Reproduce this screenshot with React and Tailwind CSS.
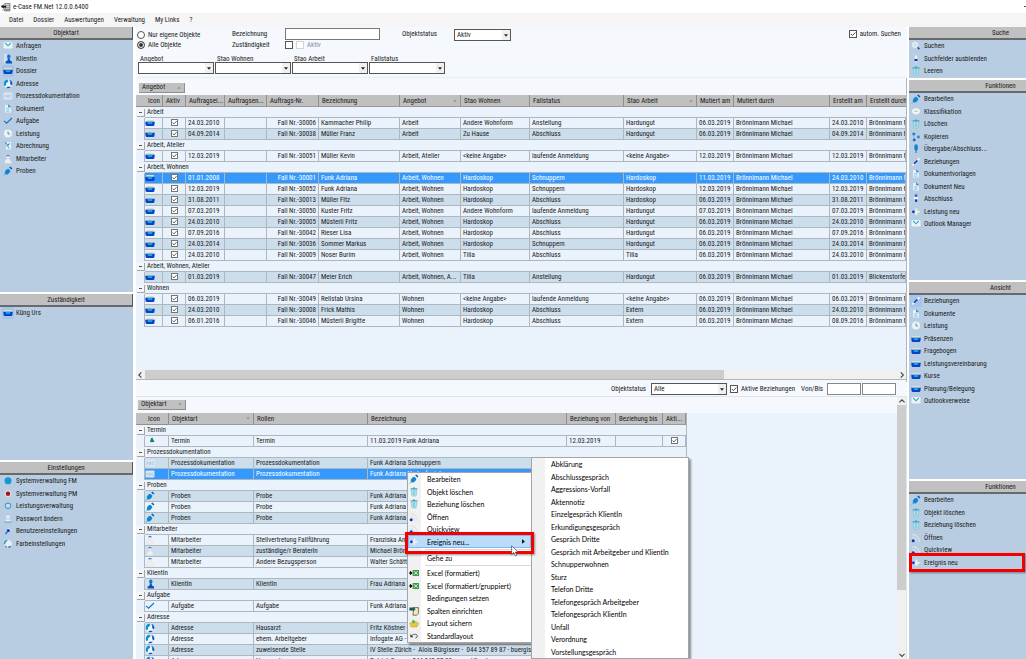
import { useState } from "react";
import clsx from "clsx";

/* ---------- icons ---------- */

const ICONS = {
  mail: (
    <>
      <rect x=".5" y="1" width="9" height="6.6" rx="1.4" fill="#eef2f3" />
      <path d="M2.2 2 L5 4.8 L7.8 2" fill="none" stroke="#25b2d4" strokeWidth="1.1" />
    </>
  ),
  person: (
    <>
      <rect x="1" y="0" width="3" height="9.6" fill="#d3e0ec" />
      <ellipse cx="5.8" cy="2.6" rx="1.7" ry="2.2" fill="#0a78d2" />
      <path d="M4.9 4.4 H6.7 L7 6.6 L9 7.4 V9.4 H2.6 V7.4 L4.6 6.6 Z" fill="#0a50c4" />
    </>
  ),
  tray: (
    <>
      <path d="M1.4 2 H8.6 L9.4 4 H.6 Z" fill="#dedcd4" />
      <path d="M.2 3.8 H9.8 L9.4 7 Q9.2 8 8.2 8 H1.8 Q.8 8 .6 7 Z" fill="#0a3fcb" />
      <path d="M2.4 3.8 H7.6 L7 6 H3 Z" fill="#14a4d6" />
    </>
  ),
  globe: (
    <>
      <circle cx="5" cy="5" r="4.4" fill="#f2f7fa" />
      <path d="M1 3.2 A4.4 4.4 0 0 1 4.4 .6 L5.4 2.4 L3 4.2 L3 6.6 L1.4 7 A4.4 4.4 0 0 1 1 3.2 Z" fill="#0a8fd8" />
      <path d="M6 .8 A4.4 4.4 0 0 1 9.4 5.4 L8 6.4 L7 4 L7.4 2.8 Z" fill="#0a5cc6" />
      <path d="M3.2 9 L4.6 7.8 L8 7.8 A4.4 4.4 0 0 1 3.2 9 Z" fill="#0a50c4" />
    </>
  ),
  abc: (
    <>
      <rect x=".5" y="1.6" width="9" height="7" rx="1" fill="#dbe7f1" />
      <path d="M1.6 6.6 L2.4 3.8 L3.2 6.6 M4.4 4 H5.6 V6.4 H4.4 Z M8.6 4 H7 V6.4 H8.6" fill="none" stroke="#93bfe0" strokeWidth=".6" />
    </>
  ),
  doc: (
    <>
      <path d="M2 1 H6 L8 3.4 V8.6 H2 Z" fill="#e4f0f8" />
      <path d="M5.2 .2 L8.2 3.2 H5.2 Z" fill="#1a8cd2" />
      <path d="M3.2 4.6 H6.4 M3.2 6 H6.4 M3.2 7.4 H6.4" stroke="#6cbce4" strokeWidth=".6" />
    </>
  ),
  check: <path d="M1 4.8 L3.6 7.2 L9 2" fill="none" stroke="#0f74c8" strokeWidth="1.1" />,
  clock: (
    <>
      <circle cx="5" cy="4.6" r="4" fill="#eff2f0" />
      <path d="M5 2.4 V5 H7" fill="none" stroke="#22a8d0" strokeWidth="1" />
    </>
  ),
  bill: (
    <>
      <path d="M3.2 1 H8 V8.6 H3.2 Z" fill="#e8f1f5" />
      <path d="M2.2 1 L4.8 4.6 L6.6 2.4" fill="none" stroke="#1a9cd0" strokeWidth="1.1" />
      <path d="M4.6 5.2 L6.2 7.6" stroke="#4688c8" strokeWidth=".9" />
    </>
  ),
  staff: (
    <>
      <circle cx="5" cy="2.8" r="1.8" fill="#f0efec" stroke="#cfd6dc" strokeWidth=".3" />
      <path d="M3.2 2.2 A1.9 1.9 0 0 1 6.8 2.2 Z" fill="#2a6cd0" />
      <path d="M4 4.8 H6 L8.2 7.2 V9.2 H1.8 V7.2 Z" fill="#f0efec" stroke="#cfd6dc" strokeWidth=".3" />
    </>
  ),
  pen: (
    <>
      <path d="M1.8 5.8 Q3.2 3 5.4 2.8 L7.4 4.8 Q7 7.2 4.4 8.4 L2 8.2 Z" fill="#0c86d2" />
      <path d="M6.2 1.4 L7.4 .4 L9.4 2.4 L8.4 3.6 Z" fill="#0a50c4" />
      <path d="M.6 9.6 L2.4 7.8" stroke="#4cb8dc" strokeWidth="1" />
    </>
  ),
  magnifier: (
    <>
      <circle cx="4" cy="3.8" r="2.8" fill="#d3e4ef" stroke="#e6eef2" strokeWidth="1" />
      <path d="M6.6 6.4 L8.4 8.2" stroke="#1a58c4" strokeWidth="1.6" />
    </>
  ),
  updown: (
    <>
      <path d="M5 .8 L6.8 3.4 H3.2 Z M4.2 3.4 H5.8 V5 H4.2 Z" fill="#f2f3f2" />
      <rect x="3.6" y="5" width="2.8" height="2.2" fill="#0836c4" />
      <rect x="4.2" y="7.2" width="1.6" height="1.4" fill="#f2f3f2" />
    </>
  ),
  trash: (
    <>
      <path d="M1.6 1.2 H8.4 V2.4 H1.6 Z M4 .4 H6 V1.2 H4 Z" fill="#35a9c8" />
      <path d="M2.2 3 H7.8 L7 9 H3 Z" fill="#dff1f5" stroke="#5cbcd4" strokeWidth=".6" />
      <path d="M4.2 3.4 V8.2 M5.8 3.4 V8.2" stroke="#35a9c8" strokeWidth=".7" />
    </>
  ),
  bubble: (
    <>
      <ellipse cx="5" cy="4.2" rx="4" ry="3" fill="#f2f4f4" />
      <path d="M3.2 4.2 H6.8" stroke="#9fb8cc" strokeWidth=".9" />
      <path d="M3.8 6.6 L5 8.2 L6 6.6 Z" fill="#f2f4f4" />
    </>
  ),
  copy: (
    <>
      <circle cx="2.8" cy="2" r="1.5" fill="#0f78cf" />
      <circle cx="7.4" cy="5" r="1.4" fill="#1c88da" />
      <circle cx="3.2" cy="7.8" r="1.5" fill="#0f66cb" />
      <path d="M2.8 2 V7.8" stroke="#77b4e0" strokeWidth=".7" />
    </>
  ),
  pin: (
    <>
      <rect x="3.4" y=".2" width="3.4" height="6.4" rx="1.7" fill="#0f84d4" />
      <path d="M5 6 V9" stroke="#2a68b8" strokeWidth="1" />
    </>
  ),
  link: (
    <>
      <path d="M1.4 8.4 L3.6 6.4" stroke="#f4f6f6" strokeWidth="1.8" />
      <path d="M3 6.8 L6.8 3" stroke="#0a3cc4" strokeWidth="1.6" />
      <path d="M6.4 3.4 L8.4 1.4" stroke="#f4f6f6" strokeWidth="1.8" />
    </>
  ),
  stamp: (
    <>
      <rect x="3.9" y=".4" width="2.4" height="2.4" fill="#1a6aca" />
      <path d="M3.2 3 H6.8 L7.4 5.2 H2.6 Z" fill="#f2f3f2" />
      <rect x="4" y="5.4" width="2.2" height="2.4" fill="#0836c4" />
    </>
  ),
  plusdot: (
    <>
      <path d="M5.4 1.6 V8 M2.4 4.8 H8.6" stroke="#f1f1ee" strokeWidth="1.8" />
      <circle cx="2.4" cy="4.8" r="1.4" fill="#0836c4" />
    </>
  ),
  dotCyan: <circle cx="5" cy="4.8" r="3.5" fill="#1398d2" />,
  dotRed: (
    <>
      <circle cx="5" cy="4.8" r="3.6" fill="#d7dce4" />
      <circle cx="5" cy="4.8" r="2.2" fill="#a8121c" />
    </>
  ),
  ring: <circle cx="5" cy="4.8" r="2.8" fill="#c9dcec" stroke="#2a94cc" strokeWidth="1" />,
  password: (
    <>
      <circle cx="5" cy="2.8" r="1.9" fill="#e3eaf0" />
      <path d="M2.4 5.4 H7.6 V7.2 H2.4 Z" fill="#e3eaf0" />
      <path d="M1.4 8.2 H8.6" stroke="#5cb0d8" strokeWidth="1" />
    </>
  ),
  tool: (
    <>
      <path d="M5 1.4 L8.4 4.2 L5 5.8 Z" fill="#e8eef3" />
      <path d="M2.4 8 L5.2 4.8" stroke="#2f6cc8" strokeWidth="1.4" />
      <circle cx="5.4" cy="4.6" r="1.5" fill="#0a3cc4" />
    </>
  ),
  palette: (
    <>
      <circle cx="5" cy="4.8" r="3.8" fill="#e9eff2" />
      <path d="M4.2 1.4 A3.6 3.6 0 0 0 1.6 5.2 M2.2 7 L4 8.4" fill="none" stroke="#2a8fd2" strokeWidth="1.2" />
      <path d="M5.4 8.4 L7.6 7.4" stroke="#1a58c4" strokeWidth="1.2" />
    </>
  ),
  rss: (
    <>
      <path d="M1.2 4.6 A4.8 4.8 0 0 1 5.8 9.2 M1.2 1.6 A7.6 7.6 0 0 1 8.8 9.2" fill="none" stroke="#dfe1e2" strokeWidth="1.2" />
      <circle cx="2.2" cy="7.8" r="1.5" fill="#0836c4" />
    </>
  ),
  termin: (
    <>
      <path d="M5 6 Q5.6 1.6 7.4 1.4 Q8.4 4 9.6 6 Z" fill="#0f7f78" />
      <path d="M5 6.6 H7.4" stroke="#c8dce4" strokeWidth=".8" />
    </>
  ),
  excel: (
    <>
      <path d="M0 5 H2.4 M1.4 3.4 L3.2 5 L1.4 6.6 Z" stroke="#111" strokeWidth="1" fill="#111" />
      <rect x="3.6" y="2" width="6.4" height="6" fill="#3f9c48" />
      <path d="M5 3.2 L8.6 6.8 M8.6 3.2 L5 6.8" stroke="#e4f3e2" strokeWidth="1" />
    </>
  ),
  columns: (
    <>
      <path d="M4.6 1.6 H9.4 V7.6 L7.6 9.2 H4 Z" fill="#f3ebb4" stroke="#444" strokeWidth=".7" />
      <path d="M.4 1.6 H4 V.8 L6.6 3.2 L4 5.4 V4.4 H.4 Z" fill="#175a68" />
    </>
  ),
  save: (
    <>
      <path d="M.8 5 L8 4 L9.8 5.4 L8 9 H2 Z" fill="#e8c93c" stroke="#a8932c" strokeWidth=".4" />
      <path d="M3 4.6 L3.6 1.6 L6.6 3.6 L4.8 5.6 Z" fill="#52b548" />
    </>
  ),
  undo: (
    <>
      <path d="M2.6 4.8 C4 2.8 8.4 2.8 8.2 5 C8.2 6.4 7.4 7 6.4 7" fill="none" stroke="#444" strokeWidth=".9" />
      <path d="M1.4 3 V6.2 H4.4 Z" fill="#333" />
    </>
  ),
  logo: (
    <>
      <rect x="3.4" y="1" width="6" height="8.4" fill="#8b8b8b" />
      <path d="M4.6 2.6 H8.2 M4.6 4.4 H8.2 M4.6 6.2 H8.2" stroke="#fff" strokeWidth=".8" />
      <path d="M0 4.4 L2.6 2.8 V4 H5 V5.4 H2.6 V6.4 Z M1 8 H4" fill="#222" stroke="#222" strokeWidth=".4" />
    </>
  ),
};

const Icon = ({ name }) => (
  <svg viewBox="0 0 10 10" className="size-[10px] shrink-0" aria-hidden="true">
    {ICONS[name]}
  </svg>
);

/* ---------- data ---------- */

const MENU = ["Datei", "Dossier", "Auswertungen", "Verwaltung", "My Links", "?"];

const OBJEKTART = [
  ["mail", "Anfragen"],
  ["person", "KlientIn"],
  ["tray", "Dossier"],
  ["globe", "Adresse"],
  ["abc", "Prozessdokumentation"],
  ["doc", "Dokument"],
  ["check", "Aufgabe"],
  ["clock", "Leistung"],
  ["bill", "Abrechnung"],
  ["staff", "Mitarbeiter"],
  ["pen", "Proben"],
];

const EINSTELLUNGEN = [
  ["dotCyan", "Systemverwaltung FM"],
  ["dotRed", "Systemverwaltung PM"],
  ["ring", "Leistungsverwaltung"],
  ["password", "Passwort ändern"],
  ["tool", "Benutzereinstellungen"],
  ["palette", "Farbeinstellungen"],
];

const SUCHE = [
  ["magnifier", "Suchen"],
  ["updown", "Suchfelder ausblenden"],
  ["trash", "Leeren"],
];

const FUNKTIONEN = [
  ["pen", "Bearbeiten"],
  ["bubble", "Klassifikation"],
  ["trash", "Löschen"],
  ["copy", "Kopieren"],
  ["pin", "Übergabe/Abschluss..."],
  ["link", "Beziehungen"],
  ["doc", "Dokumentvorlagen"],
  ["doc", "Dokument Neu"],
  ["stamp", "Abschluss"],
  ["plusdot", "Leistung neu"],
  ["mail", "Outlook Manager"],
];

const ANSICHT = [
  ["link", "Beziehungen"],
  ["doc", "Dokumente"],
  ["clock", "Leistung"],
  ["tray", "Präsenzen"],
  ["tray", "Fragebogen"],
  ["tray", "Leistungsvereinbarung"],
  ["tray", "Kurse"],
  ["tray", "Planung/Belegung"],
  ["mail", "Outlookverweise"],
];

const FUNKTIONEN_DETAIL = [
  ["pen", "Bearbeiten"],
  ["trash", "Objekt löschen"],
  ["trash", "Beziehung löschen"],
  ["rss", "Öffnen"],
  ["rss", "Quickview"],
  ["plusdot", "Ereignis neu"],
];

const BM = "Brönnimann Michael";

const DOSSIERS = [
  {
    group: "Arbeit",
    rows: [
      ["24.03.2010", "30006", "Kammacher Philip", "Arbeit", "Andere Wohnform", "Anstellung", "Hardungut", "06.03.2019", BM, "24.03.2010", BM],
      ["04.09.2014", "30038", "Müller Franz", "Arbeit", "Zu Hause", "Abschluss", "Hardungut", "06.03.2019", BM, "04.09.2014", BM],
    ],
  },
  {
    group: "Arbeit, Atelier",
    rows: [
      ["12.03.2019", "30051", "Müller Kevin", "Arbeit, Atelier", "<keine Angabe>", "laufende Anmeldung", "<keine Angabe>", "12.03.2019", BM, "12.03.2019", BM],
    ],
  },
  {
    group: "Arbeit, Wohnen",
    rows: [
      ["01.01.2008", "30001", "Funk Adriana", "Arbeit, Wohnen", "Hardoskop", "Schnuppern", "Hardoskop", "11.03.2019", BM, "24.03.2010", BM],
      ["12.03.2019", "30052", "Funk Adriana", "Arbeit, Wohnen", "Hardoskop", "Schnuppern", "Hardoskop", "12.03.2019", BM, "12.03.2019", BM],
      ["31.08.2011", "30013", "Müller Fitz", "Arbeit, Wohnen", "Hardoskop", "Abschluss", "Hardoskop", "06.03.2019", BM, "31.08.2011", BM],
      ["07.03.2019", "30050", "Kuster Fritz", "Arbeit, Wohnen", "Andere Wohnform", "laufende Anmeldung", "Hardungut", "07.03.2019", BM, "07.03.2019", BM],
      ["24.03.2010", "30005", "Müsterli Fritz", "Arbeit, Wohnen", "Hardoskop", "Abschluss", "Hardungut", "06.03.2019", BM, "24.03.2010", BM],
      ["07.09.2016", "30042", "Rieser Lisa", "Arbeit, Wohnen", "Hardoskop", "Abschluss", "Hardungut", "06.03.2019", BM, "07.09.2016", BM],
      ["24.03.2014", "30036", "Sommer Markus", "Arbeit, Wohnen", "Hardoskop", "Schnuppern", "Hardungut", "06.03.2019", BM, "24.03.2014", BM],
      ["24.03.2010", "30009", "Noser Burim", "Arbeit, Wohnen", "Tilia", "Abschluss", "Tilia", "06.03.2019", BM, "24.03.2010", BM],
    ],
  },
  {
    group: "Arbeit, Wohnen, Atelier",
    rows: [
      ["01.03.2019", "30047", "Meier Erich", "Arbeit, Wohnen, A...", "Tilia", "Anstellung", "Hardungut", "06.03.2019", BM, "01.03.2019", "Blickenstorfer"],
    ],
  },
  {
    group: "Wohnen",
    rows: [
      ["06.03.2019", "30049", "Rellstab Ursina", "Wohnen", "<keine Angabe>", "laufende Anmeldung", "<keine Angabe>", "06.03.2019", BM, "06.03.2019", BM],
      ["24.03.2010", "30008", "Frick Mathis", "Wohnen", "Hardoskop", "Abschluss", "Extern", "06.03.2019", BM, "24.03.2010", BM],
      ["06.01.2016", "30046", "Müsterli Brigitte", "Wohnen", "Hardoskop", "Abschluss", "Extern", "06.03.2019", BM, "08.09.2016", BM],
    ],
  },
];

const BEZIEHUNGEN = [
  { group: "Termin", rows: [["termin", "Termin", "Termin", "11.03.2019 Funk Adriana", "12.03.2019"]] },
  {
    group: "Prozessdokumentation",
    rows: [
      ["abc", "Prozessdokumentation", "Prozessdokumentation", "Funk Adriana Schnuppern"],
      ["abc", "Prozessdokumentation", "Prozessdokumentation", "Funk Adriana Verlaufseintrag"],
    ],
  },
  {
    group: "Proben",
    rows: [
      ["pen", "Proben", "Probe", "Funk Adriana"],
      ["pen", "Proben", "Probe", "Funk Adriana"],
      ["pen", "Proben", "Probe", "Funk Adriana"],
    ],
  },
  {
    group: "Mitarbeiter",
    rows: [
      ["staff", "Mitarbeiter", "Stellvertretung Fallführung", "Franziska An"],
      ["staff", "Mitarbeiter", "zuständige/r BeraterIn", "Michael Brön"],
      ["staff", "Mitarbeiter", "Andere Bezugsperson", "Walter Schätt"],
    ],
  },
  { group: "KlientIn", rows: [["person", "KlientIn", "KlientIn", "Frau Adriana"]] },
  { group: "Aufgabe", rows: [["check", "Aufgabe", "Aufgabe", "Funk Adriana"]] },
  {
    group: "Adresse",
    rows: [
      ["globe", "Adresse", "Hausarzt", "Fritz Köstner -"],
      ["globe", "Adresse", "ehem. Arbeitgeber", "Infogate AG -"],
      ["globe", "Adresse", "zuweisende Stelle", "IV Stelle Zürich -  Alois Bürgisser -  044 357 89 87 - buergiss"],
      ["globe", "Adresse", "Hausarzt", "Patrick Favre -  044 545 87 88 - p.arzt@web.com"],
    ],
  },
];

const CONTEXT_MAIN = [
  ["pen", "Bearbeiten"],
  ["trash", "Objekt löschen"],
  ["trash", "Beziehung löschen"],
  ["rss", "Öffnen"],
  ["rss", "Quickview"],
  ["plusdot", "Ereignis neu..."],
];

const CONTEXT_TOOLS = [
  ["excel", "Excel (formatiert)"],
  ["excel", "Excel (formatiert/gruppiert)"],
  [null, "Bedingungen setzen"],
  ["columns", "Spalten einrichten"],
  ["save", "Layout sichern"],
  ["undo", "Standardlayout"],
];

const EREIGNISSE = [
  "Abklärung",
  "Abschlussgespräch",
  "Aggressions-Vorfall",
  "Aktennotiz",
  "Einzelgespräch KlientIn",
  "Erkundigungsgespräch",
  "Gespräch Dritte",
  "Gespräch mit Arbeitgeber und KlientIn",
  "Schnupperwohnen",
  "Sturz",
  "Telefon Dritte",
  "Telefongespräch Arbeitgeber",
  "Telefongespräch KlientIn",
  "Unfall",
  "Verordnung",
  "Vorstellungsgespräch",
];

/* ---------- small controls ---------- */

const Tick = ({ label, muted, small, ...props }) => {
  const size = small ? "size-[7px]" : "size-2";
  return (
    <label className={clsx("flex gap-[3px]", small ? "h-2 items-start" : "items-center", muted && "text-[#7d93a8]")}>
      <span className={clsx("grid shrink-0", size)}>
        <input
          type="checkbox"
          className={clsx(
            "peer col-start-1 row-start-1 appearance-none border bg-white",
            size,
            muted ? "border-[#cfd4d8]" : small ? "border-[#757575]" : "border-[#555]"
          )}
          {...props}
        />
        <svg viewBox="0 0 8 8" className={clsx("pointer-events-none invisible col-start-1 row-start-1 peer-checked:visible", size)}>
          <path d="M1.8 4 L3.4 5.6 L6.4 2.4" fill="none" stroke="#333" strokeWidth=".9" />
        </svg>
      </span>
      {label && <span>{label}</span>}
    </label>
  );
};

const Radio = ({ label, ...props }) => (
  <label className="flex h-[10px] items-center gap-[3px]">
    <input
      type="radio"
      name="scope"
      className="size-2 appearance-none rounded-full border border-[#555] bg-white checked:bg-[#333] checked:shadow-[inset_0_0_0_1px_white]"
      {...props}
    />
    {label}
  </label>
);

const Select = ({ label, options, className, ...props }) => (
  <span className={clsx("grid", className)}>
    <select
      aria-label={label}
      className="col-start-1 row-start-1 h-3 w-full appearance-none border border-[#555] bg-white px-[2px] leading-[10px]"
      {...props}
    >
      {options.map((o) => (
        <option key={o}>{o}</option>
      ))}
    </select>
    <span className="pointer-events-none col-start-1 row-start-1 my-px mr-px grid w-[8px] place-items-center justify-self-end bg-[#f0f0f0]">
      <svg viewBox="0 0 6 4" className="h-[3px] w-1">
        <path d="M0 0 H6 L3 4 Z" fill="#222" />
      </svg>
    </span>
  </span>
);

const SortMark = ({ down }) => (
  <svg viewBox="0 0 6 4" className="h-[3px] w-1 shrink-0">
    <path d={down ? "M0 0 H6 L3 4 Z" : "M0 4 H6 L3 0 Z"} fill="#9a9a9a" />
  </svg>
);

/* ---------- side panels ---------- */

const Panel = ({ title, items, active, right, marked, className }) => (
  <section className={clsx("min-h-0 overflow-hidden bg-[#b8cce2]", className)}>
    <h2
      className={clsx(
        "h-[13px] border-b-2 border-[#66696d] bg-[#c0c0c0] text-center leading-[12px]",
        right ? "pl-[66px]" : "border-r border-r-[#55585c]"
      )}
    >
      {title}
    </h2>
    <ul>
      {items.map(([icon, label], i) => (
        <li key={label + i} className="relative odd:h-[12px] even:h-[13px]">
          <button className={clsx("flex h-full w-full items-center gap-[2px] text-left", right ? "pl-px" : "pl-[2px]")}>
            <span className={clsx("grid size-3 place-items-center", active === i && "bg-[#a5c6ea]")}>
              <Icon name={icon} />
            </span>
            {label}
          </button>
          {marked === i && (
            <span className="absolute inset-x-0 -inset-y-[3px] mr-px border-3 border-[#f50000] shadow-[1px_1px_2px_#0006]" />
          )}
        </li>
      ))}
    </ul>
  </section>
);

/* ---------- tables ---------- */

const Th = ({ children, sort, className }) => (
  <th
    scope="col"
    className={clsx("overflow-hidden border-r border-b border-[#8f8f8f] border-b-[#9a9a9a] p-0 pl-[3px] font-normal whitespace-nowrap", className)}
  >
    {sort ? (
      <div className="flex items-center justify-between pr-[3px]">
        {children}
        <SortMark down={sort === "down"} />
      </div>
    ) : (
      children
    )}
  </th>
);

const Td = ({ children, flush, className }) => (
  <td
    className={clsx(
      "overflow-hidden border-r border-b border-[#aeb6be] py-0 leading-[10px] whitespace-nowrap",
      flush ? "px-0" : "px-[2px]",
      className
    )}
  >
    {children}
  </td>
);

const GroupRow = ({ name, span, onToggle }) => (
  <tr className="h-[11px] bg-[#eaf2fb]">
    <td className="p-0">
      <button
        onClick={onToggle}
        aria-label={name}
        className="mx-auto block size-2 border-r border-b border-[#a0a6ac] bg-[#f4f6f8]"
      >
        <span className="mx-auto block h-px w-[3px] bg-[#555]" />
      </button>
    </td>
    <td colSpan={span} className="border-b border-[#aeb6be] p-0 pl-[2px] leading-[10px]">
      {name}
    </td>
  </tr>
);

const Gutter = () => <td className="border-r border-[#aeb6be] bg-[#eaf2fb] p-0" />;

const rowTone = (selected, dark) =>
  selected ? "bg-[#3399ff] text-white" : dark ? "bg-[#ccddec]" : "bg-[#eaf2fb]";

// keeps the zebra running across group headings
const withIndex = (groups) => {
  let n = 0;
  return groups.map((g) => ({ ...g, rows: g.rows.map((cells) => ({ cells, n: n++ })) }));
};

function DossierTable() {
  const [selected, setSelected] = useState(3);
  const [closed, setClosed] = useState({});

  return (
    <table className="w-full table-fixed border-separate border-spacing-0">
      <colgroup>
        <col className="w-[9px]" />
        <col className="w-[18px]" />
        <col className="w-[23px]" />
        <col className="w-[39px]" />
        <col className="w-[42px]" />
        <col className="w-[52px]" />
        <col className="w-[81px]" />
        <col className="w-[61px]" />
        <col className="w-[69px]" />
        <col className="w-[94px]" />
        <col className="w-[73px]" />
        <col className="w-[37px]" />
        <col className="w-[96px]" />
        <col className="w-[37px]" />
        <col />
      </colgroup>
      <thead>
        <tr className="h-3 bg-[#c0c0c0] text-left leading-[10px]">
          <th scope="col" colSpan={2} className="border-r border-b border-[#8f8f8f] p-0 pl-3 font-normal">
            Icon
          </th>
          <Th>Aktiv</Th>
          <Th>Auftragsei...</Th>
          <Th>Auftragsen...</Th>
          <Th>Auftrags-Nr.</Th>
          <Th>Bezeichnung</Th>
          <Th sort="up">Angebot</Th>
          <Th>Stao Wohnen</Th>
          <Th>Fallstatus</Th>
          <Th sort="up">Stao Arbeit</Th>
          <Th>Mutiert am</Th>
          <Th>Mutiert durch</Th>
          <Th>Erstellt am</Th>
          <Th className="border-r-0">Erstellt durch</Th>
        </tr>
      </thead>
      <tbody>
        {withIndex(DOSSIERS).map(({ group, rows }) => [
          <GroupRow
            key={group}
            name={group}
            span={14}
            onToggle={() => setClosed({ ...closed, [group]: !closed[group] })}
          />,
          !closed[group] &&
            rows.map(({ cells: [start, nr, ...rest], n }) => (
              <tr key={nr} onClick={() => setSelected(n)} className={clsx("h-[11px]", rowTone(selected === n, n % 2))}>
                <Gutter />
                <Td flush>
                  <Icon name="tray" />
                </Td>
                <Td>
                  <span className="flex justify-center">
                    <Tick small defaultChecked aria-label="Aktiv" />
                  </span>
                </Td>
                <Td>{start}</Td>
                <Td />
                <Td className="text-right">Fall Nr.-{nr}</Td>
                {rest.map((value, i) => (
                  <Td key={i}>{value}</Td>
                ))}
              </tr>
            )),
        ])}
      </tbody>
    </table>
  );
}

function BeziehungTable() {
  const [selected, setSelected] = useState(2);
  const [closed, setClosed] = useState({});

  return (
    <table className="w-[551px] table-fixed border-separate border-spacing-0 border-r border-[#aeb6be]">
      <colgroup>
        <col className="w-[9px]" />
        <col className="w-[24px]" />
        <col className="w-[85px]" />
        <col className="w-[114px]" />
        <col className="w-[199px]" />
        <col className="w-[49px]" />
        <col className="w-[47px]" />
        <col />
      </colgroup>
      <thead>
        <tr className="h-3 bg-[#c0c0c0] text-left leading-[10px]">
          <th scope="col" colSpan={2} className="border-r border-b border-[#8f8f8f] p-0 pl-3 font-normal">
            Icon
          </th>
          <Th sort="down">Objektart</Th>
          <Th>Rollen</Th>
          <Th>Bezeichnung</Th>
          <Th>Beziehung von</Th>
          <Th>Beziehung bis</Th>
          <Th>Akti...</Th>
        </tr>
      </thead>
      <tbody>
        {withIndex(BEZIEHUNGEN).map(({ group, rows }) => [
          <GroupRow
            key={group}
            name={group}
            span={7}
            onToggle={() => setClosed({ ...closed, [group]: !closed[group] })}
          />,
          !closed[group] &&
            rows.map(({ cells: [icon, art, rolle, name, von], n }) => (
              <tr key={n} onClick={() => setSelected(n)} className={clsx("h-[11px]", rowTone(selected === n, n % 2))}>
                <Gutter />
                <Td flush>
                  <Icon name={icon} />
                </Td>
                <Td>{art}</Td>
                <Td>{rolle}</Td>
                <Td className="whitespace-pre">{name}</Td>
                <Td>{von}</Td>
                <Td />
                <Td>
                  <span className="flex justify-center">
                    <Tick small defaultChecked aria-label="Aktiviert" />
                  </span>
                </Td>
              </tr>
            )),
        ])}
      </tbody>
    </table>
  );
}

/* ---------- context menu ---------- */

const MenuItem = ({ icon, label, open }) => (
  <button
    role="menuitem"
    className={clsx(
      "flex w-full items-center text-left",
      open && "bg-[#b9dcfb] shadow-[inset_0_0_0_1px_#7db9f0]"
    )}
  >
    <span className="flex w-[13px] shrink-0 pl-px">{icon && <Icon name={icon} />}</span>
    <span className="grow pl-[6px]">{label}</span>
    {open && (
      <svg viewBox="0 0 4 6" className="mr-[6px] h-[5px] w-[3px]">
        <path d="M0 0 L4 3 L0 6 Z" fill="#111" />
      </svg>
    )}
  </button>
);

const ContextMenu = () => (
  <div className="absolute top-[472px] left-[407px] font-['Lato','Liberation_Sans',sans-serif] text-black">
    <div
      role="menu"
      className="w-[125px] border border-[#a5a5a5] bg-[linear-gradient(90deg,#f1f1f1_13px,#fff_13px)] shadow-[2px_2px_2px_#0006]"
    >
      <div className="grid auto-rows-[12px_13px]">
        {CONTEXT_MAIN.map(([icon, label], i) => (
          <MenuItem key={label} icon={icon} label={label} open={i === 5} />
        ))}
      </div>
      <hr className="mt-px mr-0 mb-[2px] ml-[17px] border-[#d8d8d8]" />
      <div className="grid auto-rows-[12px]">
        <MenuItem label="Gehe zu" />
      </div>
      <hr className="mt-px mr-0 mb-px ml-[17px] border-[#d8d8d8]" />
      <div className="grid auto-rows-[12px_13px]">
        {CONTEXT_TOOLS.map(([icon, label]) => (
          <MenuItem key={label} icon={icon} label={label} />
        ))}
      </div>
    </div>

    <div
      role="menu"
      className="absolute -top-[15px] left-[124px] w-[158px] border border-[#a5a5a5] bg-[linear-gradient(90deg,#f1f1f1_13px,#fff_13px)] shadow-[2px_2px_2px_#0006]"
    >
      <div className="grid auto-rows-[12px_13px]">
        {EREIGNISSE.map((label) => (
          <MenuItem key={label} label={label} />
        ))}
      </div>
    </div>

    {/* marker and pointer over the open entry */}
    <span className="absolute top-[60px] -left-[2px] h-[22px] w-[129px] border-3 border-[#f50000] shadow-[1px_1px_2px_#0006]" />
    <svg viewBox="0 0 8 12" className="absolute top-[73px] left-[104px] h-3 w-2">
      <path d="M.6 .8 V9.6 L2.8 7.6 L4.4 11 L5.8 10.2 L4.4 7 H7.2 Z" fill="#fff" stroke="#444" strokeWidth=".7" />
    </svg>
  </div>
);

/* ---------- main areas ---------- */

const SearchForm = () => (
  <form className="flex h-[51px] shrink-0 flex-col border-b border-[#e9eef2] bg-[#f5f8fc]">
    <div className="flex h-6 items-start pt-[2px] pl-[1px]">
      <div className="w-[95px] pt-px">
        <Radio label="Nur eigene Objekte" />
        <Radio label="Alle Objekte" defaultChecked />
      </div>
      <div className="grid grid-cols-[53px_95px]">
        <label htmlFor="bez">Bezeichnung</label>
        <input id="bez" className="-mt-px h-3 border border-[#777] bg-white px-[2px]" />
        <span>Zuständigkeit</span>
        <span className="flex gap-[3px]">
          <Tick aria-label="Zuständigkeit" />
          <Tick label="Aktiv" muted />
        </span>
      </div>
      <label htmlFor="status" className="ml-[22px] w-[52px]">
        Objektstatus
      </label>
      <Select id="status" label="Objektstatus" options={["Aktiv"]} className="w-[57px]" />
      <div className="mr-[6px] ml-auto">
        <Tick label="autom. Suchen" defaultChecked />
      </div>
    </div>
    <div className="flex gap-px pt-[2px] pl-[2px]">
      {["Angebot", "Stao Wohnen", "Stao Arbeit", "Fallstatus"].map((label) => (
        <div key={label} className="w-[76px]">
          <div className="h-[9px] pl-[2px] leading-[12px]">{label}</div>
          <Select label={label} options={[""]} />
        </div>
      ))}
    </div>
  </form>
);

const GroupTag = ({ label, down }) => (
  <button className="flex h-[10px] items-center gap-3 border-r border-b border-[#8f8f8f] bg-[#c0c0c0] px-[3px] leading-[9px]">
    {label}
    <SortMark down={down} />
  </button>
);

const Arrow = ({ d }) => (
  <svg viewBox="0 0 8 8" className="size-2 shrink-0">
    <path d={d} fill="none" stroke="#444" strokeWidth="1.1" />
  </svg>
);

export default function App() {
  return (
    <div className="relative flex h-screen flex-col overflow-hidden bg-white font-['Roboto_Condensed','Liberation_Sans',sans-serif] text-[7px] leading-[10px] text-[#1c1c1c]">
      <header>
        <div className="flex h-[13px] items-center gap-[2px] pl-px">
          <Icon name="logo" />
          <h1 className="grow">e-Case FM.Net 12.0.0.6400</h1>
          <span className="h-px w-[2px] bg-[#555]" />
        </div>
        <nav className="flex h-[14px] items-center gap-[10px] bg-[#f5f5f5] pl-[9px]">
          {MENU.map((m) => (
            <button key={m}>{m}</button>
          ))}
        </nav>
      </header>

      <div className="flex min-h-0 grow">
        <aside className="flex w-[134px] shrink-0 flex-col gap-[2px] pr-px">
          <Panel title="Objektart" items={OBJEKTART} active={2} className="grow-[265] basis-0" />
          <Panel title="Zuständigkeit" items={[["tray", "Küng Urs"]]} active={0} className="grow-[166] basis-0" />
          <Panel title="Einstellungen" items={EINSTELLUNGEN} className="grow-[197] basis-0" />
        </aside>

        <main className="flex min-w-0 grow flex-col px-[2px]">
          <SearchForm />

          <section className="flex min-h-0 grow-[305] basis-0 flex-col border-r border-[#aeb6be] bg-[#f5f8fc]">
            <div className="flex h-[17px] shrink-0 items-end pb-[2px] pl-[3px]">
              <GroupTag label="Angebot" />
            </div>
            <div className="min-h-0 grow overflow-hidden bg-[#eaf2fb]">
              <DossierTable />
            </div>
            <div className="flex h-[9px] shrink-0 items-center bg-[#f0f0f0]">
              <Arrow d="M5.4 1.4 L2.8 4 L5.4 6.6" />
              <div className="mx-px h-full grow">
                <div className="h-full w-[77%] bg-[#cdcdcd]" />
              </div>
              <Arrow d="M2.8 1.4 L5.4 4 L2.8 6.6" />
            </div>
            <div className="h-[3px] shrink-0 border-t border-[#aeb6be]" />
          </section>

          <form className="flex h-[14px] shrink-0 items-center justify-end bg-[#f5f8fc] pr-[11px]">
            <label htmlFor="relstatus" className="mr-[5px]">
              Objektstatus
            </label>
            <Select id="relstatus" label="Objektstatus" options={["Alle"]} className="mr-[3px] w-[76px]" />
            <Tick label="Aktive Beziehungen" defaultChecked />
            <label htmlFor="von" className="mr-1 ml-[6px]">
              Von/Bis
            </label>
            <input id="von" className="mr-px h-3 w-[34px] border border-[#888] bg-white" />
            <input aria-label="Bis" className="h-3 w-[34px] border border-[#888] bg-white" />
          </form>

          <section className="flex min-h-0 grow-[262] basis-0 border-t border-r border-[#dfe4e9] bg-[#eaf2fb]">
            <div className="min-w-0 grow overflow-hidden">
              <div className="flex h-4 items-end bg-[#f5f8fc] pb-[3px] pl-[2px]">
                <GroupTag label="Objektart" down />
              </div>
              <BeziehungTable />
            </div>
            <div className="flex w-[9px] shrink-0 flex-col items-center bg-[#f0f0f0]">
              <Arrow d="M1.4 5.4 L4 2.8 L6.6 5.4" />
              <div className="w-full grow">
                <div className="h-3/4 w-full bg-[#cdcdcd]" />
              </div>
              <Arrow d="M1.4 2.8 L4 5.4 L6.6 2.8" />
            </div>
          </section>
        </main>

        <aside className="flex w-[117px] shrink-0 flex-col gap-[2px]">
          <Panel title="Suche" items={SUCHE} right className="h-[51px] shrink-0" />
          <Panel title="Funktionen" items={FUNKTIONEN} right className="grow-[200] basis-0" />
          <Panel title="Ansicht" items={ANSICHT} active={0} right className="grow-[197] basis-0" />
          <Panel title="Funktionen" items={FUNKTIONEN_DETAIL} marked={5} right className="grow-[178] basis-0" />
        </aside>
      </div>

      <ContextMenu />
    </div>
  );
}
